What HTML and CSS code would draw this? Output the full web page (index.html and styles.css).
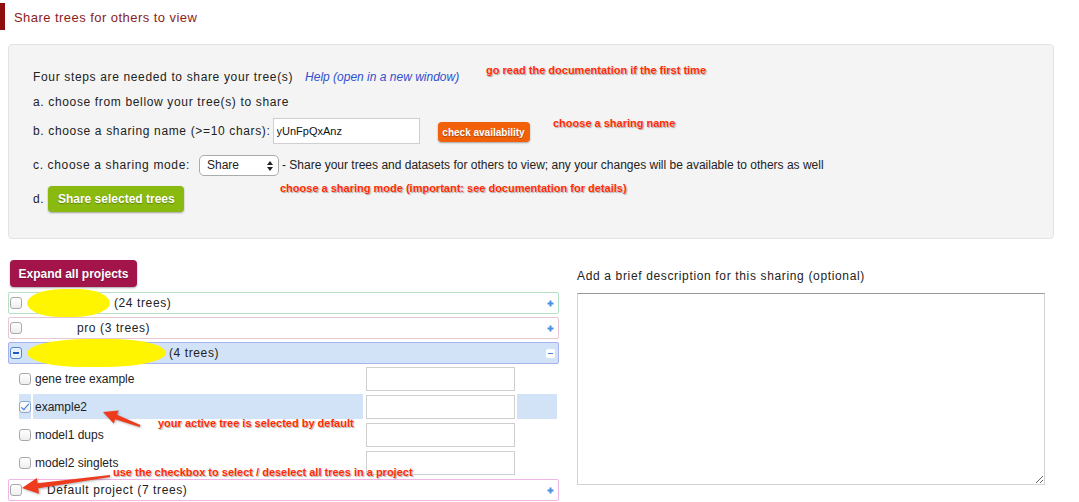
FILE: index.html
```html
<!DOCTYPE html>
<html lang="en">
<head>
<meta charset="utf-8">
<title>Share trees</title>
<link rel="stylesheet" href="styles.css">
</head>
<body>
<div class="page-title">Share trees for others to view</div>
<div class="content">
  <section class="panel">
    <div class="step step-intro"><span class="sp">Four steps are needed to share your tree(s)</span><a class="help" href="#">Help (open in a new window)</a></div>
    <div class="step step-a"><span class="sp">a. choose from bellow your tree(s) to share</span></div>
    <div class="step step-b"><span class="sp">b. choose a sharing name (&gt;=10 chars):</span><input class="name-input" type="text" value="yUnFpQxAnz"><button class="btn btn-orange">check availability</button></div>
    <div class="step step-c"><span class="sp">c. choose a sharing mode:</span><span class="select-wrap"><select class="mode-select"><option>Share</option></select><svg class="select-arrows" width="6" height="10" viewBox="0 0 6 10"><path d="M3 0 L6 4 L0 4 Z M0 6 L6 6 L3 10 Z" fill="#222"/></svg></span><span class="mode-desc">- Share your trees and datasets for others to view; any your changes will be available to others as well</span></div>
    <div class="step step-d"><span class="sp">d.</span><button class="btn btn-green">Share selected trees</button></div>
    <span class="note note-doc">go read the documentation if the first time</span>
    <span class="note note-name">choose a sharing name</span>
    <span class="note note-mode">choose a sharing mode (important: see documentation for details)</span>
  </section>

  <section class="lower">
    <div class="projects">
      <button class="btn btn-crimson">Expand all projects</button>

      <div class="project project-green">
        <input class="cb" type="checkbox">
        <span class="blob blob-1"></span>
        <span class="pname pname-1">(24 trees)</span>
        <svg class="plus" width="7" height="7" viewBox="0 0 7 7"><path d="M3.5 0.5 V6.5 M0.5 3.5 H6.5" stroke="#4a8fe6" stroke-width="2"/></svg>
      </div>
      <div class="project project-pink">
        <input class="cb" type="checkbox">
        <span class="pname pname-2">pro (3 trees)</span>
        <svg class="plus" width="7" height="7" viewBox="0 0 7 7"><path d="M3.5 0.5 V6.5 M0.5 3.5 H6.5" stroke="#4a8fe6" stroke-width="2"/></svg>
      </div>
      <div class="project project-open">
        <input class="cb cb-mixed" type="checkbox">
        <span class="blob blob-3"></span>
        <span class="pname pname-3">(4 trees)</span>
        <span class="minus"></span>
      </div>

      <table class="trees">
        <tr>
          <td class="c-cb"><input class="cb" type="checkbox"></td>
          <td class="c-name">gene tree example</td>
          <td class="c-input"><input class="tree-input" type="text"></td>
          <td class="c-end"></td>
        </tr>
        <tr class="active">
          <td class="c-cb"><input class="cb" type="checkbox" checked></td>
          <td class="c-name">example2</td>
          <td class="c-input"><input class="tree-input" type="text"></td>
          <td class="c-end"></td>
        </tr>
        <tr>
          <td class="c-cb"><input class="cb" type="checkbox"></td>
          <td class="c-name">model1 dups</td>
          <td class="c-input"><input class="tree-input" type="text"></td>
          <td class="c-end"></td>
        </tr>
        <tr>
          <td class="c-cb"><input class="cb" type="checkbox"></td>
          <td class="c-name">model2 singlets</td>
          <td class="c-input"><input class="tree-input" type="text"></td>
          <td class="c-end"></td>
        </tr>
      </table>

      <div class="project project-magenta project-default">
        <input class="cb" type="checkbox">
        <span class="pname pname-4">Default project (7 trees)</span>
        <svg class="plus" width="7" height="7" viewBox="0 0 7 7"><path d="M3.5 0.5 V6.5 M0.5 3.5 H6.5" stroke="#4a8fe6" stroke-width="2"/></svg>
      </div>
    </div>

    <div class="desc">
      <div class="desc-label">Add a brief description for this sharing (optional)</div>
      <textarea class="desc-text"></textarea>
    </div>

    <svg class="arrows" width="551" height="242" viewBox="0 0 551 242">
      <polygon points="95,152 110.6,150.4 109,154.7 132.4,165.1 131.6,166.9 107.2,159.3 105.6,163.5" fill="#ee3b1d"/>
      <polygon points="14,228 28.8,217.9 29.6,223.3 101.9,215 102.1,217 30.2,228.3 31,233.7" fill="#ee3b1d"/>
    </svg>
    <span class="note note-active">your active tree is selected by default</span>
    <span class="note note-checkbox">use the checkbox to select / deselect all trees in a project</span>
  </section>
</div>
</body>
</html>
```

FILE: styles.css
```css
* { box-sizing: border-box; }

body {
  margin: 0;
  font-family: "Liberation Sans", Arial, sans-serif;
  font-size: 12px;
  color: #222;
  background: #fff;
}

.page-title {
  margin-top: 3px;
  height: 27px;
  padding-top: 1px;
  border-left: 5px solid #8e0e0e;
  padding-left: 9px;
  display: flex;
  align-items: center;
  font-size: 13px;
  letter-spacing: 0.45px;
  color: #8b1c1c;
}

.content {
  width: 1062px;
  padding: 0 8px;
}

.panel {
  position: relative;
  margin-top: 14px;
  background: #f4f4f4;
  border: 1px solid #e3e3e3;
  border-radius: 4px;
  padding: 22px 24px 25px;
}

.step { display: flex; align-items: center; white-space: nowrap; }
.step-intro { height: 20px; }
.step-a { height: 20px; margin-top: 5px; }
.step-b { height: 28px; margin-top: 5px; }
.step-c { height: 22px; margin-top: 9px; }
.step-d { height: 28px; margin-top: 9px; }

.sp { letter-spacing: 0.65px; }

.help {
  margin-left: 12px;
  font-style: italic;
  color: #3050d0;
  text-decoration: none;
}

.name-input {
  margin-left: 2px;
  width: 147px;
  height: 26px;
  border: 1px solid #cfcfcf;
  padding: 0 3px;
  font: 11px "Liberation Sans", Arial, sans-serif;
  color: #111;
  background: #fff;
  outline: none;
}

.btn {
  border: none;
  color: #fff;
  font-family: "Liberation Sans", Arial, sans-serif;
  font-weight: bold;
  padding: 0;
  border-radius: 4px;
  text-shadow: 0 1px 1px rgba(0,0,0,0.3);
  box-shadow: 0 1px 2px rgba(0,0,0,0.35);
  cursor: pointer;
}

.btn-orange {
  margin-left: 18px;
  margin-top: 2px;
  width: 92px;
  height: 20px;
  background: #f2600a;
  font-size: 10px;
}

.select-wrap {
  position: relative;
  margin-left: 9px;
  display: inline-block;
  height: 21px;
}

.mode-select {
  appearance: none;
  -webkit-appearance: none;
  width: 80px;
  height: 21px;
  border: 1px solid #ababab;
  border-radius: 5px;
  background: #fff;
  padding: 0 0 0 7px;
  font: 12px "Liberation Sans", Arial, sans-serif;
  color: #222;
  display: block;
}

.select-arrows {
  position: absolute;
  right: 6px;
  top: 6px;
  pointer-events: none;
}

.mode-desc { margin-left: 3px; }

.btn-green {
  margin-left: 4px;
  width: 136px;
  height: 26px;
  background: #8aba0f;
  font-size: 12px;
}

.note {
  position: absolute;
  color: #ff2a00;
  font-weight: bold;
  font-size: 11px;
  line-height: 13px;
  white-space: nowrap;
  text-shadow: 0 0 1px #fff, 1px 1px 1px rgba(0,0,0,0.35);
}

.note-doc { left: 477px; top: 19px; }
.note-name { left: 544px; top: 72px; }
.note-mode { left: 271px; top: 137px; }

.lower {
  position: relative;
  display: flex;
  gap: 18px;
  margin-top: 21px;
}

.projects { width: 551px; flex: none; }

.btn-crimson {
  display: block;
  margin-left: 2px;
  width: 127px;
  height: 27px;
  background: #a3144b;
  font-size: 12px;
}

.project {
  margin-top: 3px;
  height: 22px;
  border: 1px solid;
  border-radius: 2px;
  display: flex;
  align-items: center;
  padding: 0 4px 0 1px;
  background: #fff;
  letter-spacing: 0.6px;
}

.btn-crimson + .project { margin-top: 5px; }

.project-green { border-color: #b6e0c6; }
.project-pink { border-color: #e6c7d3; }
.project-open { background: #d2e2f7; border-color: #a9b1ef; }
.project-magenta { border-color: #f0b6e6; }
.project-default { margin-top: 1px; }

.plus, .minus { margin-left: auto; }

.minus {
  width: 9px;
  height: 9px;
  background: #fff;
  border-radius: 2px;
  position: relative;
  margin-right: -1px;
}
.minus::after {
  content: "";
  position: absolute;
  left: 2px;
  top: 4px;
  width: 5px;
  height: 1.5px;
  background: #4a7fd8;
}

.blob {
  display: inline-block;
  height: 28px;
  background: #fff500;
  border-radius: 45% 40% 45% 40% / 50%;
  margin: 0 0 0 5px;
  flex: none;
}
.blob-1 { width: 83px; }
.blob-3 { width: 139px; }

.pname { white-space: nowrap; }
.pname-1 { margin-left: 4px; }
.pname-2 { margin-left: 55px; }
.pname-3 { margin-left: 3px; }
.pname-4 { margin-left: 25px; }

.cb {
  appearance: none;
  -webkit-appearance: none;
  width: 12px;
  height: 12px;
  margin: 0;
  border: 1px solid #a8a8a8;
  border-radius: 3px;
  background: linear-gradient(#ffffff, #eeeeee);
  position: relative;
  display: block;
  flex: none;
}
.cb:checked { border-color: #8aa9d6; }
.cb:checked::after {
  content: "";
  position: absolute;
  left: 3px;
  top: 0px;
  width: 3px;
  height: 7px;
  border: solid #2f74d8;
  border-width: 0 1.5px 1.5px 0;
  transform: rotate(40deg);
}
.cb-mixed { border-color: #4f86d6; background: #e9f1fc; }
.cb-mixed::after {
  content: "";
  position: absolute;
  left: 2px;
  top: 4px;
  width: 6px;
  height: 1.5px;
  background: #1d5fbf;
}

.trees {
  border-collapse: separate;
  border-spacing: 2px 3px;
  margin: -1px 0 0 9px;
  width: 542px;
}
.trees td { padding: 0; height: 25px; }
.c-cb { width: 12px; }
.c-name { width: 330px; padding-left: 2px !important; }
.c-input { width: 150px; }
.c-end { width: 40px; }
.active .c-cb, .active .c-name, .active .c-end { background: #d2e3f7; }

.tree-input {
  display: block;
  margin-left: 1px;
  width: 149px;
  height: 24px;
  border: 1px solid #cfcfcf;
  background: #fff;
  outline: none;
}

.desc { width: 468px; flex: none; }
.desc-label {
  margin-top: 8px;
  line-height: 16px;
  letter-spacing: 0.65px;
}
.desc-text {
  display: block;
  margin-top: 9px;
  width: 468px;
  height: 192px;
  border: 1px solid #d3d3d3;
  border-top-color: #9a9a9a;
  background: #fff;
  resize: both;
  outline: none;
}

.arrows {
  position: absolute;
  left: 0;
  top: 0;
  pointer-events: none;
  overflow: visible;
  filter: drop-shadow(1px 1px 1px rgba(0,0,0,0.3));
}

.note-active { left: 150px; top: 157px; }
.note-checkbox { left: 105px; top: 206px; }
```
